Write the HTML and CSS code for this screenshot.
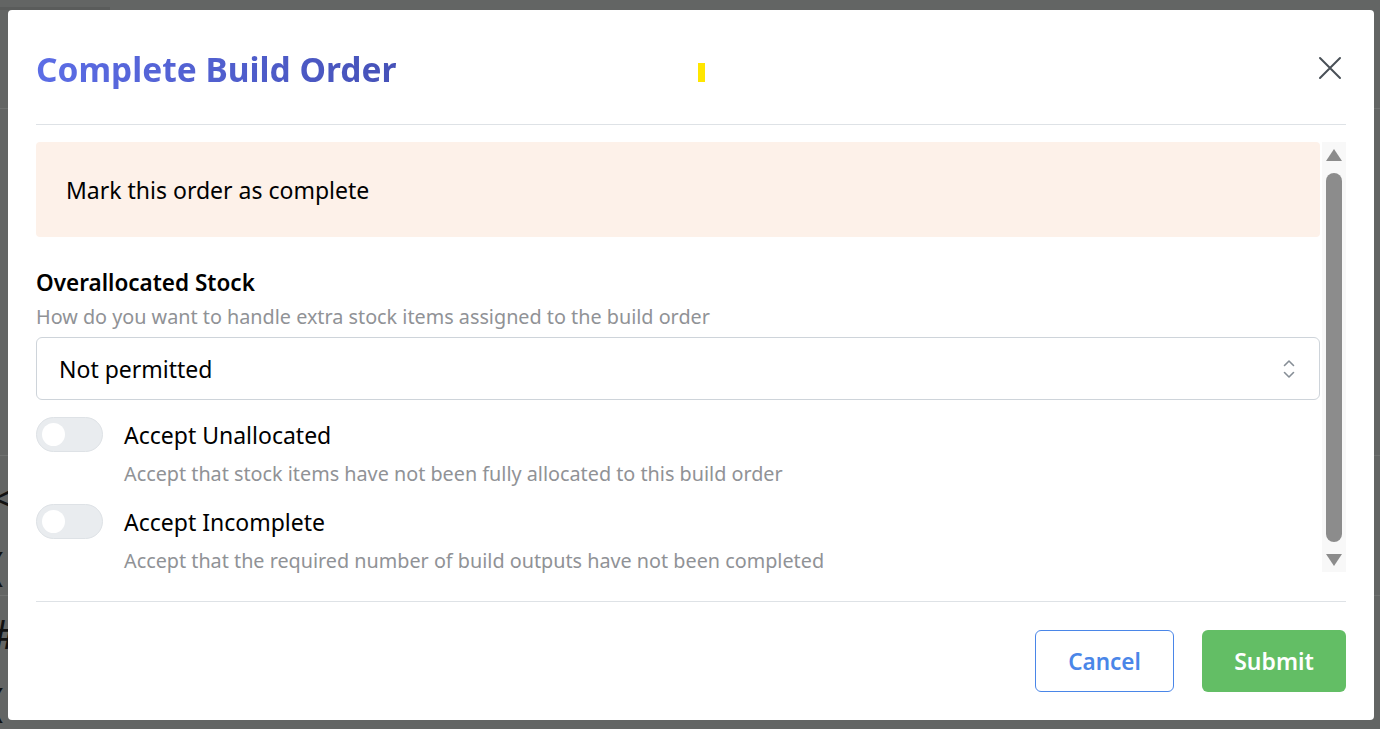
FILE: index.html
```html
<!DOCTYPE html>
<html lang="en">
<head>
<meta charset="utf-8">
<title>Complete Build Order</title>
<link rel="stylesheet" href="styles.css">
</head>
<body>
<div class="backdrop">
  <div class="bg-lines">
    <div class="bg-tab"></div>
    <div class="bg-row r1"></div>
    <div class="bg-row r2"></div>
    <div class="bg-row r3"></div>
  </div>
  <div class="bg-glyphs">
    <span>&lt;</span><span>(</span><span>#</span><span>(</span>
  </div>
  <div class="modal">
    <header class="modal-header">
      <h2 class="modal-title">Complete Build Order</h2>
      <span class="cursor-mark"></span>
      <button class="close-btn" aria-label="Close">
        <svg width="24" height="24" viewBox="0 0 24 24" fill="none" stroke="#495057" stroke-width="2" stroke-linecap="round"><path d="M2 2L22 22M22 2L2 22"/></svg>
      </button>
    </header>
    <div class="modal-body">
      <div class="scroll-area">
        <div class="alert">Mark this order as complete</div>
        <div class="field">
          <div class="field-label">Overallocated Stock</div>
          <div class="field-desc">How do you want to handle extra stock items assigned to the build order</div>
          <div class="select">
            <span>Not permitted</span>
            <svg width="16" height="22" viewBox="0 0 16 22" fill="none" stroke="#868e96" stroke-width="1.6" stroke-linecap="round" stroke-linejoin="round"><path d="M3.5 7.5L8 3L12.5 7.5M3.5 14.5L8 19L12.5 14.5"/></svg>
          </div>
        </div>
        <div class="switch-row">
          <span class="switch"><span class="knob"></span></span>
          <div class="switch-text">
            <div class="switch-label">Accept Unallocated</div>
            <div class="switch-desc">Accept that stock items have not been fully allocated to this build order</div>
          </div>
        </div>
        <div class="switch-row">
          <span class="switch"><span class="knob"></span></span>
          <div class="switch-text">
            <div class="switch-label">Accept Incomplete</div>
            <div class="switch-desc">Accept that the required number of build outputs have not been completed</div>
          </div>
        </div>
      </div>
      <div class="scrollbar">
        <span class="arrow up"></span>
        <span class="thumb"></span>
        <span class="arrow down"></span>
      </div>
    </div>
    <footer class="modal-footer">
      <button class="btn btn-cancel">Cancel</button>
      <button class="btn btn-submit">Submit</button>
    </footer>
  </div>
</div>
</body>
</html>
```
FILE: styles.css
```css
* { box-sizing: border-box; }
html, body { margin: 0; padding: 0; }
body {
  width: 1380px;
  height: 729px;
  overflow: hidden;
  font-family: "Noto Sans", "Open Sans", sans-serif;
  background: #636564;
}
.backdrop {
  position: relative;
  width: 1380px;
  height: 729px;
  padding: 10px 6px 9px 8px;
  background: #636564;
}
.bg-lines { position: absolute; inset: 0; }
.bg-tab { position: absolute; left: 0; top: 7px; width: 110px; height: 3px; background: #5a5c5b; }
.bg-row { position: absolute; left: 0; right: 0; height: 1px; background: #707271; }
.r1 { top: 108px; }
.r2 { top: 455px; }
.r3 { top: 595px; }
.bg-glyphs {
  position: absolute;
  left: -8px;
  top: 478px;
  display: flex;
  flex-direction: column;
  gap: 28px;
  font-size: 40px;
  color: #111;
  line-height: 40px;
}
.modal {
  position: relative;
  height: 100%;
  background: #fff;
  border-radius: 4px;
  padding: 0 28px;
  display: flex;
  flex-direction: column;
}
.modal-header {
  height: 115px;
  flex: none;
  display: flex;
  align-items: center;
  justify-content: space-between;
  border-bottom: 1px solid #dee2e6;
  position: relative;
}
.modal-title {
  margin: 0;
  font-size: 33.5px;
  font-weight: 700;
  background: linear-gradient(90deg, #5c6de6, #4652b8);
  -webkit-background-clip: text;
  background-clip: text;
  color: transparent;
  line-height: 1.2;
  margin-top: 4px;
}
.cursor-mark {
  position: absolute;
  left: 662px;
  top: 53px;
  width: 7px;
  height: 19px;
  background: #ffe600;
}
.close-btn {
  border: 0;
  background: none;
  padding: 0;
  margin-right: 4px;
  margin-top: 2px;
  width: 24px;
  height: 24px;
  display: flex;
}
.modal-body {
  display: flex;
  margin-top: 17px;
  height: 430px;
}
.scroll-area {
  flex: 1;
  min-width: 0;
}
.scrollbar {
  width: 24px;
  background: #f8f8f8;
  display: flex;
  flex-direction: column;
  align-items: center;
  padding: 7px 0 6px;
  margin-left: 2px;
}
.arrow { width: 0; height: 0; border-left: 8px solid transparent; border-right: 8px solid transparent; }
.arrow.up { border-bottom: 12px solid #8c8c8c; }
.arrow.down { border-top: 12px solid #8c8c8c; }
.thumb { width: 16px; flex: 1; margin: 12px 0 12px; background: #8c8c8c; border-radius: 8px; }
.alert {
  background: #fdf1e9;
  border-radius: 4px;
  height: 95px;
  padding: 0 30px;
  display: flex;
  align-items: center;
  font-size: 23px;
  color: #000;
}
.field { margin-top: 29px; }
.field-label { font-size: 22.5px; font-weight: 600; color: #000; line-height: 34px; }
.field-desc { font-size: 19.8px; color: #909296; line-height: 30px; margin-top: 2px; }
.select {
  margin-top: 5px;
  height: 63px;
  border: 1px solid #ced4da;
  border-radius: 6px;
  display: flex;
  align-items: center;
  justify-content: space-between;
  padding: 0 22px 0 22px;
  font-size: 23px;
  color: #000;
}
.switch-row {
  display: flex;
  gap: 21px;
  margin-top: 17px;
}
.switch-row + .switch-row { margin-top: 15px; }
.switch {
  width: 67px;
  height: 35px;
  border-radius: 18px;
  background: #e9ecef;
  border: 1px solid #dee2e6;
  display: flex;
  align-items: center;
  padding-left: 5px;
  flex: none;
}
.knob { width: 23px; height: 23px; border-radius: 50%; background: #fff; }
.switch-label { font-size: 23px; color: #000; line-height: 36px; }
.switch-desc { font-size: 19.8px; color: #909296; line-height: 30px; margin-top: 6px; }
.modal-footer {
  border-top: 1px solid #dee2e6;
  margin-top: auto;
  margin-bottom: 28px;
  padding-top: 28px;
  display: flex;
  justify-content: flex-end;
  gap: 28px;
}
.btn {
  height: 62px;
  border-radius: 6px;
  font-family: inherit;
  font-size: 23px;
  font-weight: 600;
  padding: 0;
}
.btn-cancel { width: 139px; background: #fff; border: 1px solid #4a86e8; color: #4a86e8; font-size: 22.5px; }
.btn-submit { width: 144px; background: #63be65; border: 0; color: #fff; }
```
